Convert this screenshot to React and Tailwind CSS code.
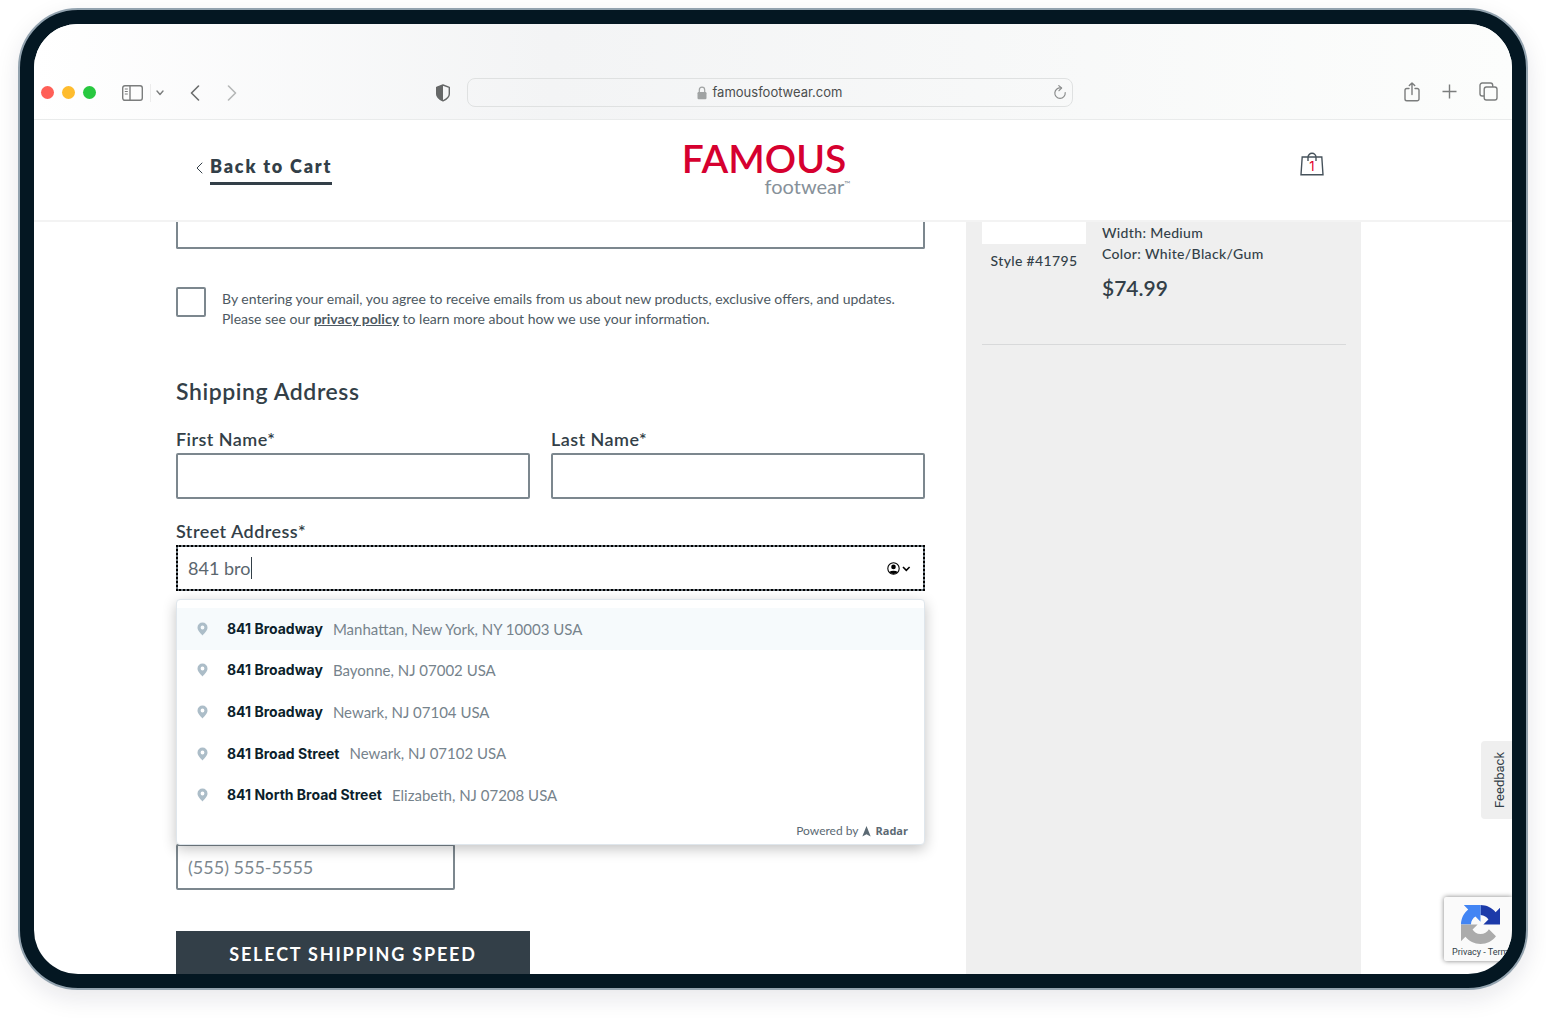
import React from 'react';

const suggestions = [
  { street: '841 Broadway', place: 'Manhattan, New York, NY 10003 USA', active: true },
  { street: '841 Broadway', place: 'Bayonne, NJ 07002 USA' },
  { street: '841 Broadway', place: 'Newark, NJ 07104 USA' },
  { street: '841 Broad Street', place: 'Newark, NJ 07102 USA' },
  { street: '841 North Broad Street', place: 'Elizabeth, NJ 07208 USA' },
];

function SidebarIcon() {
  return (
    <svg width="21" height="16" viewBox="0 0 21 16" fill="none" stroke="#7b7d7d" strokeWidth="1.4">
      <rect x="0.7" y="0.7" width="19.6" height="14.6" rx="2.2" />
      <path d="M8 1v14" />
      <path d="M2.8 4h3M2.8 6.5h3M2.8 9h3" strokeWidth="1" />
    </svg>
  );
}

function ShieldIcon() {
  return (
    <svg width="16" height="18" viewBox="0 0 16 18">
      <path d="M8 1 L14.3 3.3 V10 C14.3 13.2 11.5 15.3 8 16.9 C4.5 15.3 1.7 13.2 1.7 10 V3.3 Z" fill="none" stroke="#666868" strokeWidth="1.4" strokeLinejoin="round" />
      <path d="M8 1 L1.7 3.3 V10 C1.7 13.2 4.5 15.3 8 16.9 Z" fill="#666868" />
    </svg>
  );
}

function LockIcon() {
  return (
    <svg width="10" height="14" viewBox="0 0 10 14">
      <path d="M2.3 7V4a2.7 2.9 0 0 1 5.4 0v3" fill="none" stroke="#a0a3a3" strokeWidth="1.2" />
      <rect x="0.5" y="6" width="9" height="7.2" rx="1.2" fill="#a0a3a3" />
    </svg>
  );
}

function ReloadIcon() {
  return (
    <svg width="14" height="16" viewBox="0 0 14 16" fill="none" stroke="#8b8d8d" strokeWidth="1.2" strokeLinecap="round" strokeLinejoin="round">
      <path d="M8 3A5.2 5.2 0 1 0 12.2 7.6" />
      <path d="M5.8 0.6L8.6 3L6 5.7" />
    </svg>
  );
}

function ShareIcon() {
  return (
    <svg width="16" height="20" viewBox="0 0 16 20" fill="none" stroke="#7b7d7d" strokeWidth="1.4" strokeLinecap="round" strokeLinejoin="round">
      <path d="M5 6.5H2.8A1.8 1.8 0 0 0 1 8.3V17A1.8 1.8 0 0 0 2.8 18.8H13.2A1.8 1.8 0 0 0 15 17V8.3A1.8 1.8 0 0 0 13.2 6.5H11" />
      <path d="M8 12.5V1M5.3 3.6L8 0.9L10.7 3.6" />
    </svg>
  );
}

function TabsIcon() {
  return (
    <svg width="19" height="19" viewBox="0 0 19 19" fill="none" stroke="#7b7d7d" strokeWidth="1.4">
      <rect x="5.2" y="5" width="12.8" height="13" rx="2.2" />
      <path d="M5 14H3.2A2.2 2.2 0 0 1 1 11.8V3.2A2.2 2.2 0 0 1 3.2 1H11.5A2.2 2.2 0 0 1 13.7 3.2V5" />
    </svg>
  );
}

function BagIcon() {
  return (
    <svg width="24" height="24" viewBox="0 0 24 24" fill="none" stroke="#46525b" strokeWidth="1.4">
      <path d="M2.2 5H21.8L23 22.7H1Z" />
      <path d="M8 9V5.5a4 4.2 0 0 1 8 0V9" />
    </svg>
  );
}

function PinIcon() {
  return (
    <svg width="11" height="14" viewBox="0 0 11 14">
      <path fillRule="evenodd" fill="#acbdc8" d="M5.5 0.5A5 5 0 0 0 0.5 5.5C0.5 8.6 3.5 11 5.5 13.5C7.5 11 10.5 8.6 10.5 5.5A5 5 0 0 0 5.5 0.5ZM5.5 3.6a1.9 1.9 0 1 1 0 3.8a1.9 1.9 0 0 1 0-3.8Z" />
    </svg>
  );
}

function ContactIcon() {
  return (
    <svg width="24" height="13" viewBox="0 0 24 13">
      <circle cx="6.5" cy="6.5" r="5.7" fill="none" stroke="#000" strokeWidth="1.1" />
      <circle cx="6.5" cy="4.9" r="2.3" fill="#000" />
      <path d="M2.3 10a5 3 0 0 1 8.4 0A5.6 5.6 0 0 1 2.3 10Z" fill="#000" />
      <path d="M16 5l3.3 3.3L22.6 5" fill="none" stroke="#000" strokeWidth="1.6" />
    </svg>
  );
}

function RecaptchaIcon() {
  return (
    <svg width="39" height="39" viewBox="0 0 64 64">
      <path fill="#1c3aa9" d="M32 .1C42 .1 50.900 4.700 56.800 11.800L64 4.700V32H36.700L45 23.700C42.500 19.700 38 17.500 32 16.500Z" />
      <path fill="#4285f4" d="M32 .1V27.300L23.700 19C19.700 21.500 16.500 26 16.300 32H0C0 22 4.600 13.200 11.800 7.300L4.600 .1Z" />
      <path fill="#ababab" d="M0 32H27.300L19 40.300C21.500 44.300 26 47.700 32 47.700C38 47.700 43 44.500 45.800 39.600L57.400 51.300C51.600 59 42.400 64 32 64C22 64 13.100 59.400 7.200 52.200L0 59.400Z" />
    </svg>
  );
}

function Chevron({ points, width, height, color, stroke }) {
  return (
    <svg width={width} height={height} fill="none" stroke={color} strokeWidth={stroke} strokeLinecap="round" strokeLinejoin="round">
      <polyline points={points} />
    </svg>
  );
}

function BrowserBar() {
  return (
    <div className="shrink-0 pt-11 border-b border-[#e9ebeb] bg-linear-to-r from-white via-[#f3f4f5] via-35% to-[#fcfdfc]">
      <div className="h-[51px] flex items-center pr-2 pb-0.5">
        <div className="flex-1 flex items-center pl-[7px]">
          <div className="flex gap-2">
            <span className="size-[13px] rounded-full bg-[#ff5f57]" />
            <span className="size-[13px] rounded-full bg-[#febc2e]" />
            <span className="size-[13px] rounded-full bg-[#28c840]" />
          </div>
          <button aria-label="Show sidebar" className="ml-[26px]"><SidebarIcon /></button>
          <span className="ml-[7px] w-px h-[18px] bg-[#ececec]" />
          <button aria-label="Tab groups" className="ml-[5px]">
            <Chevron width="8" height="6" points="1,1 4,4.5 7,1" color="#7c7e7e" stroke="1.4" />
          </button>
          <button aria-label="Back" className="ml-[26px]">
            <Chevron width="10" height="16" points="8.5,1 1.5,8 8.5,15" color="#6b6d6d" stroke="1.6" />
          </button>
          <button aria-label="Forward" className="ml-[27px]">
            <Chevron width="10" height="16" points="1.5,1 8.5,8 1.5,15" color="#b5b7b7" stroke="1.6" />
          </button>
          <button aria-label="Privacy report" className="ml-auto mr-4"><ShieldIcon /></button>
        </div>
        <div className="w-[606px] h-[29px] flex items-center rounded-lg border border-[#dfe1e1] px-[5px]">
          <div className="flex-1 flex items-center justify-center gap-1.5 font-['Inter',sans-serif] text-[13px] text-[#4c4e4e] pl-3.5">
            <LockIcon />
            famousfootwear.com
          </div>
          <button aria-label="Reload"><ReloadIcon /></button>
        </div>
        <div className="flex-1 flex items-center justify-end gap-[22px] pr-[6px] pb-0.5">
          <button aria-label="Share"><ShareIcon /></button>
          <button aria-label="New tab">
            <svg width="15" height="15" stroke="#7b7d7d" strokeWidth="1.4"><path d="M7.5 0.5v14M0.5 7.5h14" /></svg>
          </button>
          <button aria-label="Show tabs"><TabsIcon /></button>
        </div>
      </div>
    </div>
  );
}

function SiteHeader() {
  return (
    <header className="shrink-0 h-[102px] border-b-2 border-[#f3f3f3] bg-white grid grid-cols-3 items-center pl-[162px] pr-[188px]">
      <a href="#cart" className="flex items-center gap-[7px] pb-1">
        <Chevron width="7" height="12" points="6,1 1,6 6,11" color="#333f48" stroke="1" />
        <span className="border-b-[3px] border-[#333f48] text-lg leading-[31px] font-extrabold tracking-widest">Back to Cart</span>
      </a>
      <a href="#home" aria-label="Famous Footwear" className="justify-self-center flex flex-col pb-2 pl-3">
        <span className="pr-1 text-[39px] leading-10 font-semibold text-[#d6002f]">FAMOUS</span>
        <span className="self-end flex text-xl leading-4 text-[#87919a]">
          footwear<span className="text-[8px] leading-3">™</span>
        </span>
      </a>
      <a href="#bag" aria-label="Bag, 1 item" className="justify-self-end relative mb-3">
        <BagIcon />
        <span className="absolute inset-x-0 top-1.5 text-center font-['Inter',sans-serif] text-[13px] leading-4 text-[#e4002b]">1</span>
      </a>
    </header>
  );
}

function Field({ id, label, className }) {
  return (
    <div className={className}>
      <label htmlFor={id} className="block text-lg leading-[27px] font-semibold tracking-wide">{label}</label>
      <input id={id} type="text" className="block w-full h-[46px] border-2 border-[#7c878e] rounded-xs px-2.5 bg-white" />
    </div>
  );
}

function Suggestions() {
  return (
    <div className="absolute inset-x-0 top-full mt-2 h-[246px] flex flex-col bg-white border border-[#dfe6ec] rounded-sm pt-2 shadow-[0_4px_14px_rgba(0,0,0,0.24)]">
      <ul className="h-52 grid grid-rows-5">
        {suggestions.map(({ street, place, active }) => (
          <li key={street + place} className={active ? 'flex items-center pl-5 bg-[#f6fafc]' : 'flex items-center pl-5'}>
            <PinIcon />
            <span className="ml-[19px] font-['Inter',sans-serif] text-sm font-bold text-[#0c1f2c]">{street}</span>
            <span className="ml-2.5 text-[15px] text-[#76838c]">{place}</span>
          </li>
        ))}
      </ul>
      <div className="flex items-center justify-end gap-1 pr-4 pt-1.5 text-xs leading-[18px] text-[#5b6973]">
        <span>Powered by</span>
        <svg width="9" height="11" viewBox="0 0 9 11"><path d="M4.5 0L8.7 10.5L4.5 8.3L0.3 10.5Z" fill="#5b6973" /></svg>
        <span className="font-['Open_Sans',sans-serif] text-[11px] font-bold">Radar</span>
      </div>
    </div>
  );
}

function ShippingForm() {
  return (
    <form className="flex-1 min-w-0">
      <input type="email" aria-label="Email" className="block w-full h-[27px] border-2 border-t-0 border-[#7c878e] rounded-b-xs" />
      <div className="mt-[38px] flex gap-4">
        <input id="consent" type="checkbox" className="appearance-none shrink-0 size-[30px] border-2 border-[#7c878e] rounded-xs bg-white" />
        <label htmlFor="consent" className="pt-0.5 text-sm leading-5 text-[#4d5962]">
          By entering your email, you agree to receive emails from us about new products, exclusive offers, and updates.
          <br />
          Please see our <a href="#privacy" className="font-bold underline">privacy policy</a> to learn more about how we use your information.
        </label>
      </div>
      <h2 className="mt-[46px] text-[23px] leading-8 font-semibold tracking-wide">Shipping Address</h2>
      <div className="mt-[19px] flex gap-[21px]">
        <Field id="first" label="First Name*" className="w-[354px]" />
        <Field id="last" label="Last Name*" className="flex-1" />
      </div>
      <div className="relative mt-[19px]">
        <label htmlFor="street" className="block text-lg leading-[27px] font-semibold tracking-wide">Street Address*</label>
        <div className="relative flex items-center h-[46px] border-2 border-dotted border-black bg-[#6a747c]">
          <input id="street" type="text" defaultValue="841 bro" className="size-full bg-white pl-2.5 text-lg text-[#5b666e] outline-none" />
          <span className="absolute left-[73px] top-2.5 w-px h-[22px] bg-[#333f48]" />
          <span className="absolute right-3"><ContactIcon /></span>
        </div>
        <Suggestions />
      </div>
      <input type="tel" aria-label="Phone" placeholder="(555) 555-5555" className="block mt-[253px] w-[279px] h-[46px] border-2 border-[#7c878e] rounded-xs px-2.5 text-lg placeholder:text-[#7c878e]" />
      <button type="button" className="mt-[41px] w-[354px] h-[46px] bg-[#333f48] text-lg font-bold tracking-widest text-white">SELECT SHIPPING SPEED</button>
    </form>
  );
}

function OrderSummary() {
  return (
    <aside className="w-[395px] shrink-0 bg-[#efefef] pl-4 pr-[15px]">
      <div className="flex gap-4 border-b border-[#d8d9da] h-[123px]">
        <div className="w-[104px] text-center">
          <div className="h-[22px] bg-white" />
          <p className="mt-1.5 text-sm leading-[21px] font-medium tracking-wide">Style #41795</p>
        </div>
        <div className="text-sm leading-[21px] font-medium tracking-wide">
          <p>Width: Medium</p>
          <p>Color: White/Black/Gum</p>
          <p className="mt-2.5 text-[21px] leading-7 font-semibold tracking-normal">$74.99</p>
        </div>
      </div>
    </aside>
  );
}

export default function App() {
  return (
    <div className="h-screen bg-white px-[18px] pt-2 pb-7 font-['Lato',sans-serif] text-[#333f48]">
      <div className="h-full rounded-[60px] border-2 border-[#93a3af] bg-[#041722] p-3.5 shadow-[0_8px_24px_rgba(20,20,50,0.10)]">
        <div className="relative h-full flex flex-col overflow-hidden rounded-[44px] bg-white">
          <BrowserBar />
          <SiteHeader />
          <main className="flex-1 min-h-0 overflow-hidden pr-[9px] flex">
            <div className="w-[1185px] mx-auto flex gap-[41px]">
              <ShippingForm />
              <OrderSummary />
            </div>
          </main>
          <button className="absolute right-0 bottom-[155px] w-[31px] h-[78px] flex items-center justify-center rounded-l-sm bg-[#efefef] pl-1.5">
            <span className="[writing-mode:vertical-rl] rotate-180 font-['Roboto',sans-serif] text-[13px]">Feedback</span>
          </button>
          <div className="absolute right-0 bottom-[13px] w-[68px] h-16 overflow-hidden rounded-l-xs bg-[#fafafa] shadow-[0_0_5px_gray] pt-2 pl-2">
            <div className="pl-[9px]"><RecaptchaIcon /></div>
            <p className="whitespace-nowrap font-['Roboto',sans-serif] text-[9px] leading-4">Privacy - Terms</p>
          </div>
        </div>
      </div>
    </div>
  );
}
